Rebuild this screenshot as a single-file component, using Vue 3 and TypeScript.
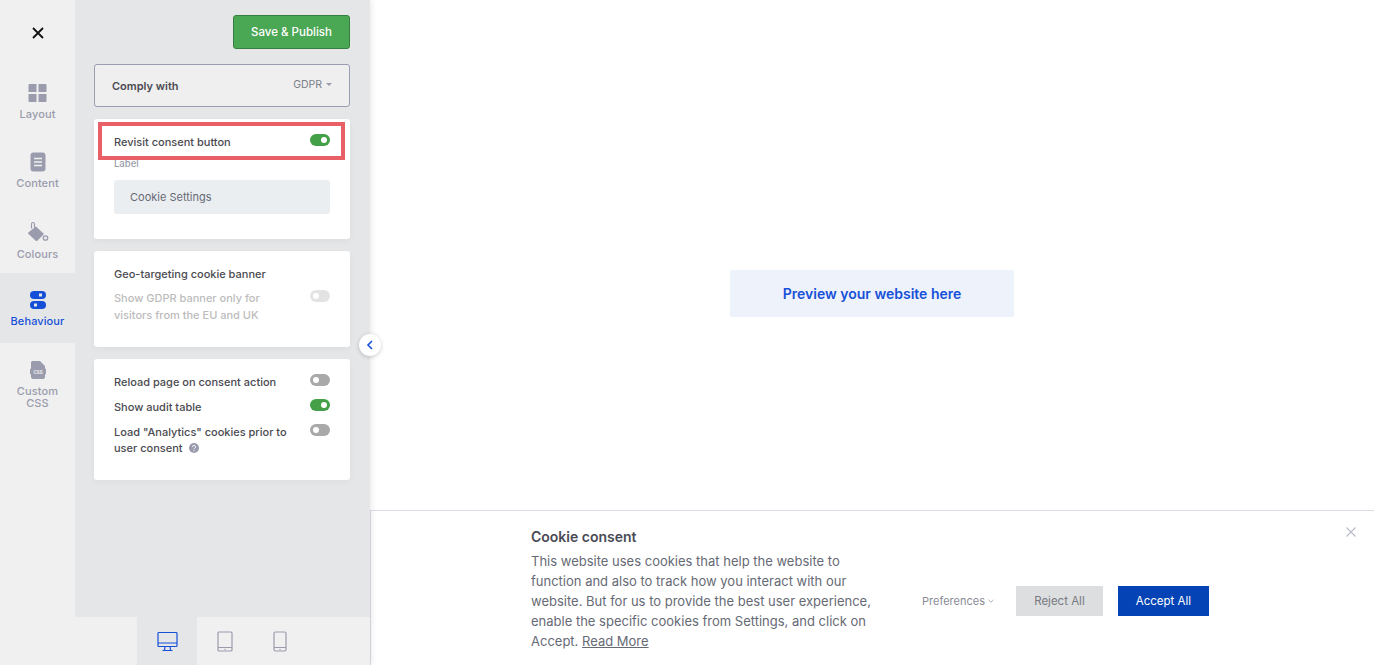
<template>
  <div class="app">
    <div class="editor">
      <div class="editor-top">
        <nav class="rail">
          <button class="rail-close" aria-label="Close">
            <svg width="14" height="14" viewBox="0 0 14 14"><path d="M2 2l10 10M12 2L2 12" stroke="#111" stroke-width="1.8" fill="none" /></svg>
          </button>
          <div v-for="item in railItems" :key="item.key" :class="['rail-item', { active: item.key === 'behaviour' }]">
            <svg v-if="item.key === 'layout'" width="20" height="20" viewBox="0 0 20 20" fill="#9a9cad">
              <path d="M1.5 1h7v8h-8V2a1 1 0 0 1 1-1zM10.5 1h7a1 1 0 0 1 1 1v7h-8zM.5 11h8v8h-7a1 1 0 0 1-1-1zM10.5 11h8v7a1 1 0 0 1-1 1h-7z" />
            </svg>
            <svg v-else-if="item.key === 'content'" width="20" height="20" viewBox="0 0 20 20">
              <rect x="2.5" y="0.5" width="15" height="19" rx="3" fill="#9a9cad" />
              <path d="M6 6.5h8M6 10h8M6 13.5h8" stroke="#f0f0f0" stroke-width="1.4" />
            </svg>
            <svg v-else-if="item.key === 'colours'" width="22" height="22" viewBox="0 0 22 22" fill="#9a9cad">
              <path d="M9 5.5l8 7.5-6.5 6.5a1.4 1.4 0 0 1-2 0L1.5 13a1.2 1.2 0 0 1 0-1.8z" />
              <path d="M4.5 7.5V3a1.5 1.5 0 0 1 3 0v5" fill="none" stroke="#9a9cad" stroke-width="1.2" />
              <circle cx="18.5" cy="17" r="2.2" fill="none" stroke="#9a9cad" stroke-width="1.3" />
            </svg>
            <svg v-else-if="item.key === 'behaviour'" width="20" height="20" viewBox="0 0 20 20">
              <rect x="2" y="1" width="16" height="8" rx="4" fill="#1650d8" />
              <rect x="2" y="11" width="16" height="8" rx="4" fill="#1650d8" />
              <rect x="11" y="3.5" width="3" height="3" fill="#e5e6e8" />
              <rect x="6" y="13.5" width="3" height="3" fill="#e5e6e8" />
            </svg>
            <svg v-else width="20" height="20" viewBox="0 0 20 20">
              <path d="M4.5 1H12l5 5v11a2 2 0 0 1-2 2H5a2 2 0 0 1-2-2V2.500A1.500 1.500 0 0 1 4.500 1z" fill="#9a9cad" />
              <rect x="2" y="8.500" width="16" height="6" rx="1" fill="#9a9cad" />
              <text x="10" y="13.500" text-anchor="middle" class="css-tag">CSS</text>
            </svg>
            <span class="rail-label" v-html="item.label"></span>
          </div>
        </nav>

        <aside class="panel">
          <div class="panel-actions">
            <button class="save-btn">Save &amp; Publish</button>
          </div>
          <div class="comply">
            <span class="comply-title">Comply with</span>
            <span class="comply-value">GDPR <i class="caret"></i></span>
          </div>

          <section class="card card-revisit">
            <div class="row row-revisit">
              <span class="row-title">Revisit consent button</span>
              <span class="toggle on"></span>
              <span class="highlight"></span>
            </div>
            <label class="field-label">Label</label>
            <div class="field">Cookie Settings</div>
          </section>

          <section class="card card-geo">
            <div class="row-title">Geo-targeting cookie banner</div>
            <div class="row row-geo">
              <span class="geo-text">Show GDPR banner only for visitors from the EU and UK</span>
              <span class="toggle disabled"></span>
            </div>
          </section>

          <section class="card card-options">
            <div v-for="opt in options" :key="opt.text" class="row row-option">
              <span class="row-title">
                {{ opt.text }}
                <svg v-if="opt.help" class="help" width="10" height="10" viewBox="0 0 10 10">
                  <circle cx="5" cy="5" r="5" fill="#9a9cad" />
                  <path d="M3.500 3.900a1.500 1.500 0 1 1 2.200 1.300c-.5.300-.7.500-.7 1" fill="none" stroke="#fff" stroke-width="1" />
                  <circle cx="5" cy="7.800" r=".65" fill="#fff" />
                </svg>
              </span>
              <span :class="['toggle', { on: opt.on }]"></span>
            </div>
          </section>

          <button class="collapse" aria-label="Collapse">
            <svg width="8" height="10" viewBox="0 0 8 10"><path d="M6 1L2 5l4 4" fill="none" stroke="#1650d8" stroke-width="1.600" /></svg>
          </button>
        </aside>
      </div>

      <div class="devices">
        <div class="device active">
          <svg width="21" height="21" viewBox="0 0 21 21" fill="none" stroke="#1650d8" stroke-width="1.200">
            <rect x="1" y="1.500" width="19" height="14" rx=".8" />
            <path d="M1 12h19M8 15.500l-.5 3.500M13 15.500l.5 3.500M5.500 19.500h10" />
          </svg>
        </div>
        <div class="device">
          <svg width="16" height="21" viewBox="0 0 16 21" fill="none" stroke="#9a9cad" stroke-width="1.200">
            <rect x="1" y="1" width="14" height="19" rx="1" />
            <path d="M1 16.500h14M7.500 18.300h1" />
          </svg>
        </div>
        <div class="device">
          <svg width="14" height="21" viewBox="0 0 14 21" fill="none" stroke="#9a9cad" stroke-width="1.200">
            <rect x="1" y="1" width="12" height="19" rx="1.500" />
            <path d="M1 16.500h12M6.500 18.300h1" />
          </svg>
        </div>
      </div>
    </div>

    <main class="preview">
      <div class="preview-area">
        <div class="preview-box">Preview your website here</div>
      </div>
      <div class="banner">
        <div class="banner-text">
          <h4>Cookie consent</h4>
          <p>This website uses cookies that help the website to function and also to track how you interact with our website. But for us to provide the best user experience, enable the specific cookies from Settings, and click on Accept. <a>Read More</a></p>
        </div>
        <div class="banner-actions">
          <span class="prefs">Preferences
            <svg width="6" height="4" viewBox="0 0 6 4"><path d="M.5.800L3 3.200 5.500.8" fill="none" stroke="#9a9ca5" stroke-width=".8" /></svg>
          </span>
          <button class="btn-reject">Reject All</button>
          <button class="btn-accept">Accept All</button>
        </div>
        <svg class="banner-close" width="10" height="10" viewBox="0 0 10 10"><path d="M.5.500l9 9M9.500.500l-9 9" stroke="#b9bcc8" stroke-width="1.100" fill="none" /></svg>
      </div>
    </main>
  </div>
</template>

<script setup lang="ts">
const railItems = [
  { key: 'layout', label: 'Layout' },
  { key: 'content', label: 'Content' },
  { key: 'colours', label: 'Colours' },
  { key: 'behaviour', label: 'Behaviour' },
  { key: 'css', label: 'Custom<br>CSS' },
]

const options = [
  { text: 'Reload page on consent action', on: false, help: false },
  { text: 'Show audit table', on: true, help: false },
  { text: 'Load "Analytics" cookies prior to user consent', on: false, help: true },
]
</script>

<style>
html, body { margin: 0; background: #fff; }
</style>

<style scoped>
.app {
  display: flex; width: 1374px; height: 665px; overflow: hidden;
  font-family: Inter, "Liberation Sans", sans-serif;
  color: #4a4a55;
}
button { font-family: inherit; cursor: pointer; }

.editor {
  width: 370px; flex: none; display: flex; flex-direction: column;
  position: relative; z-index: 2;
  box-shadow: 2px 0 6px rgba(0, 0, 0, .08);
}
.editor-top { flex: 1; display: flex; min-height: 0; }

.rail { width: 75px; flex: none; background: #f0f0f0; }
.rail-close {
  display: flex; align-items: center; justify-content: center;
  width: 75px; height: 66px; padding: 0 0 0 0; border: 0; background: none;
  padding-bottom: 0;
}
.rail-item {
  height: 69px; box-sizing: border-box; padding-top: 17px;
  display: flex; flex-direction: column; align-items: center;
  color: #9a9cad; text-align: center;
}
.rail-item.active { background: #e5e6e8; color: #1650d8; height: 70px; }
.rail-label { font-size: 11px; font-weight: 500; line-height: 12px; margin-top: 5px; letter-spacing: .1px; }
.css-tag { font-size: 4.500px; font-weight: 700; fill: #f0f0f0; font-family: Inter, sans-serif; }

.panel {
  flex: 1; background: #e5e6e8; position: relative;
  padding: 15px 20px 0 19px;
}
.panel-actions { display: flex; justify-content: flex-end; margin-bottom: 15px; }
.save-btn {
  width: 117px; height: 34px; background: #4aa754; color: #fff;
  border: 1px solid #367f40; border-radius: 3px;
  font-size: 11.500px; font-weight: 500;
}
.comply {
  height: 43px; box-sizing: border-box; margin-bottom: 12px;
  display: flex; align-items: center; justify-content: space-between;
  background: #efeff0; border: 1px solid #9a9cb2; border-radius: 3px;
  padding: 0 17px;
}
.comply-title { font-size: 11px; font-weight: 600; color: #4a4a50; }
.comply-value { font-size: 10.500px; color: #7d7f88; display: flex; align-items: center; gap: 4px; position: relative; top: -1px; }
.caret { width: 0; height: 0; border: 3px solid transparent; border-top: 3px solid #9a9cad; border-bottom: 0; }

.card {
  background: #fff; border-radius: 3px; margin-bottom: 12px;
  padding: 0 20px; box-sizing: border-box;
  box-shadow: 0 2px 6px rgba(0, 0, 0, .04);
}
.card-revisit { height: 120px; padding-top: 15px; }
.card-geo { height: 96px; padding-top: 15px; }
.card-options { height: 121px; padding-top: 15px; }

.row { display: flex; justify-content: space-between; align-items: flex-start; position: relative; }
.row-title { font-size: 11px; font-weight: 500; line-height: 16px; color: #4a4a50; display: block; }
.row-revisit { height: 24px; }
.highlight {
  position: absolute; left: -16px; right: -15px; top: -12px; height: 38px;
  border: 4px solid #e85f65; box-sizing: border-box; pointer-events: none;
}
.toggle {
  width: 20px; height: 12px; border-radius: 6px; background: #a9a9a9;
  position: relative; flex: none;
}
.row .toggle { margin-top: 0; }
.toggle::after {
  content: ""; position: absolute; top: 3px; left: 3px;
  width: 6px; height: 6px; border-radius: 50%; background: #fff;
}
.toggle.on { background: #43a047; }
.toggle.on::after { left: 11px; }
.toggle.disabled { background: #e3e3e3; }

.field-label { display: block; font-size: 9.500px; font-weight: 500; color: #9a9ca8; line-height: 12px; margin-bottom: 10px; }
.field {
  height: 34px; box-sizing: border-box; background: #ebeef1; border-radius: 3px;
  padding-left: 16px; display: flex; align-items: center;
  font-size: 11px; color: #666a75;
}

.row-geo { margin-top: 8px; }
.geo-text { width: 170px; font-size: 11px; font-weight: 500; line-height: 17px; color: #bcbcbc; }
.row-option { margin-bottom: 9px; }
.row-option .row-title { width: 186px; }
.help { margin-left: 4px; vertical-align: -1px; }

.collapse {
  position: absolute; left: 284px; top: 334px; width: 22px; height: 22px;
  border: 0; border-radius: 50%; background: #fff; padding: 0;
  display: flex; align-items: center; justify-content: center;
  box-shadow: 0 1px 4px rgba(0, 0, 0, .2);
}

.devices { height: 48px; flex: none; background: #f0f0f0; display: flex; padding-left: 137px; }
.device { width: 55px; display: flex; align-items: center; justify-content: center; }
.device.active { width: 60px; background: #e5e6e8; }

.preview { flex: 1; min-width: 0; display: flex; flex-direction: column; background: #fff; }
.preview-area { flex: 1; display: flex; justify-content: center; align-items: flex-start; padding-top: 270px; }
.preview-box {
  width: 284px; height: 47px; background: #eef2fb; border-radius: 2px;
  display: flex; align-items: center; justify-content: center;
  color: #1650d8; font-size: 14px; font-weight: 600;
}

.banner {
  height: 155px; flex: none; box-sizing: border-box; position: relative;
  border-top: 1px solid #dcdce4; border-left: 1px solid #dcdce4;
  padding: 17px 0 0 160px; display: flex;
}
.banner-text { width: 346px; }
.banner-text h4 { margin: 0; font-size: 14px; font-weight: 600; line-height: 18px; color: #4a4a55; }
.banner-text p { margin: 5px 0 0; font-size: 13px; line-height: 20px; color: #666a75; }
.banner-text a { text-decoration: underline; }
.banner-actions { display: flex; align-items: center; height: 30px; margin: 58px 0 0 45px; }
.prefs { font-size: 11px; color: #8a8c95; display: flex; align-items: center; gap: 3px; margin-right: 22px; }
.btn-reject, .btn-accept { height: 30px; border: 0; font-size: 11.500px; }
.btn-reject { width: 87px; background: #dddee0; color: #777a82; margin-right: 15px; }
.btn-accept { width: 91px; background: #0443b5; color: #fff; }
.banner-close { position: absolute; right: 18px; top: 16px; }
</style>
